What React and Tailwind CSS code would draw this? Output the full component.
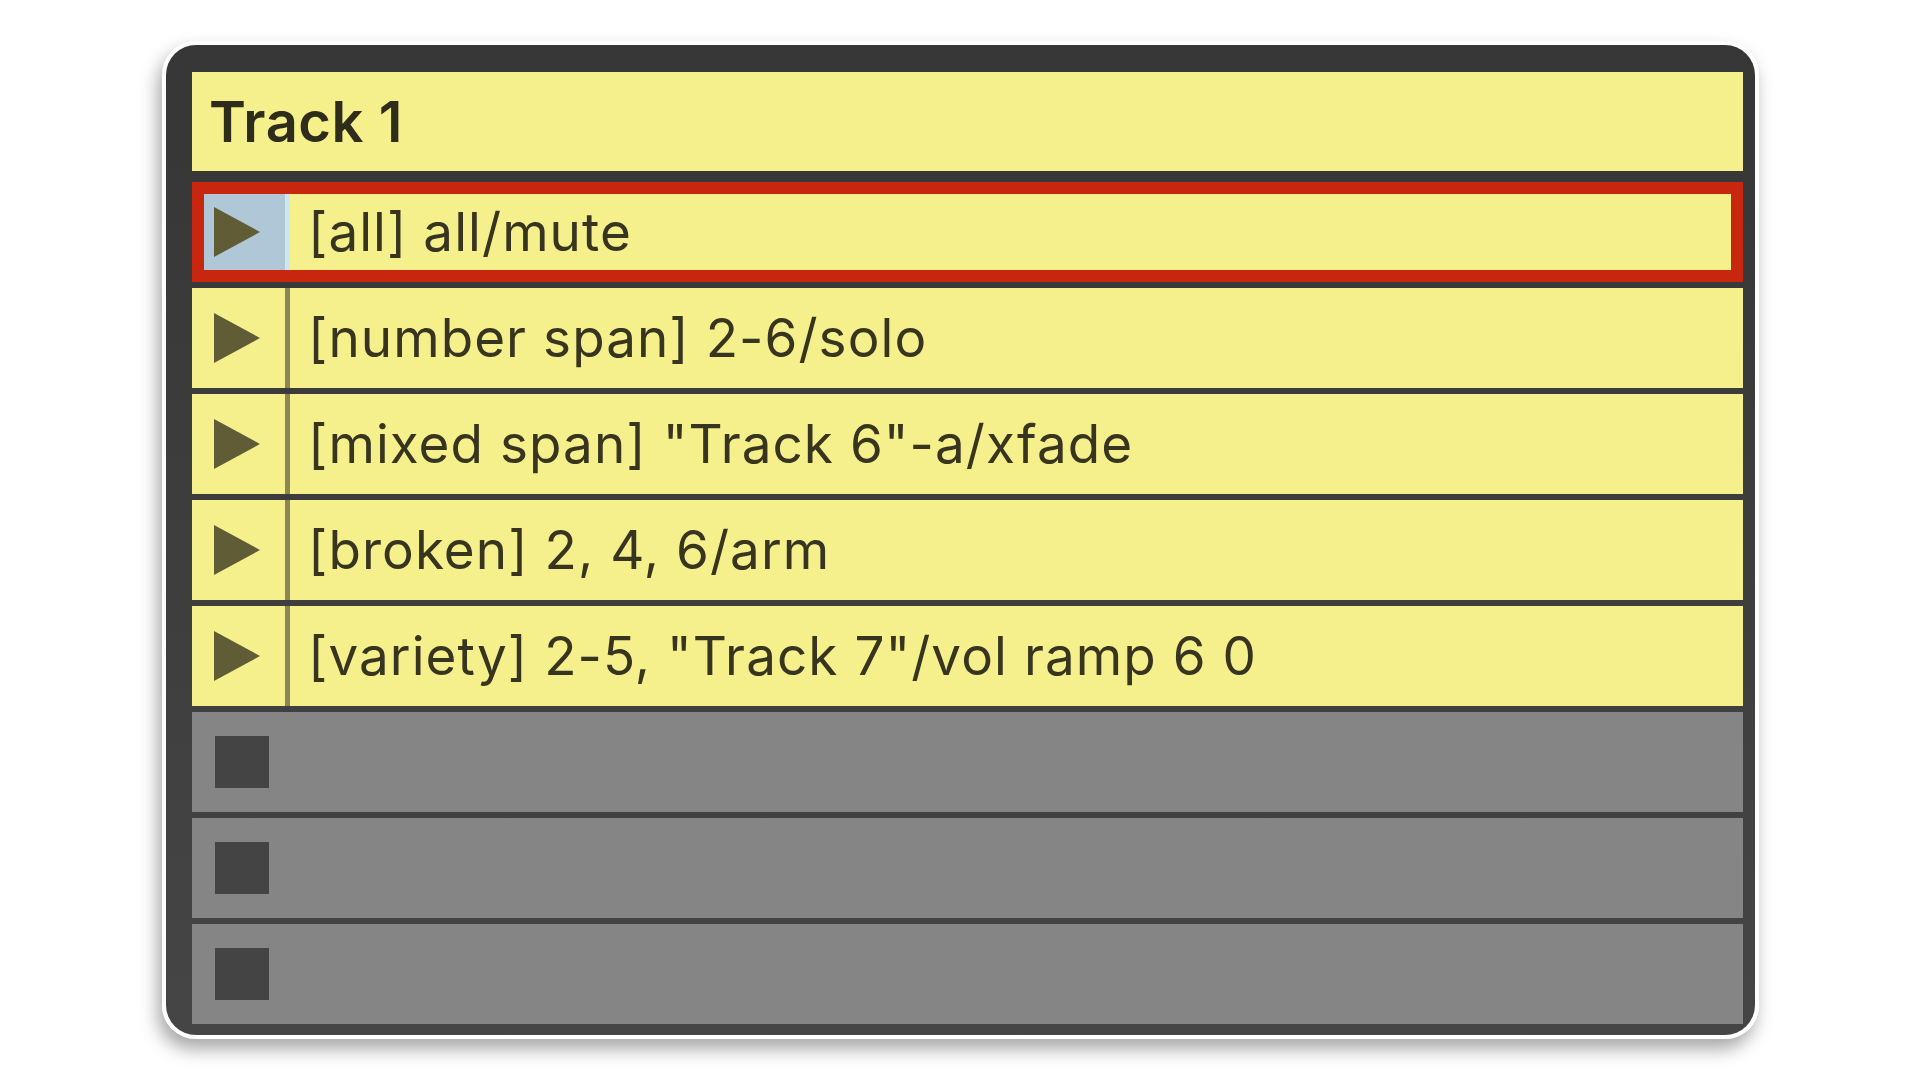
const clips = [
  { label: "[all] all/mute", selected: true },
  { label: "[number span] 2-6/solo" },
  { label: "[mixed span] \"Track 6\"-a/xfade" },
  { label: "[broken] 2, 4, 6/arm" },
  { label: "[variety] 2-5, \"Track 7\"/vol ramp 6 0" },
];

function PlayIcon() {
  return (
    <svg width="48" height="52" viewBox="0 0 48 52" className="shrink-0">
      <path d="M1 1 L47 26 L1 51 Z" fill="#5f5c36" />
    </svg>
  );
}

function ClipRow({ label, selected }) {
  return (
    <div className="relative h-[100px] flex bg-[#f5f08c]">
      <div className={`w-[93px] h-full flex items-center pl-[21px] ${selected ? "bg-[#afc7d6]" : ""}`}>
        <PlayIcon />
      </div>
      <div className={`w-[5px] h-full ${selected ? "bg-[#cde6ef]" : "bg-[#8a8656]"}`} />
      <div className="flex-1 flex items-center pl-[18px] text-[53px] tracking-[0.02em] text-[#37351f] leading-none whitespace-nowrap">
        {label}
      </div>
      {selected && (
        <div className="absolute inset-0 border-[12px] border-[#c8260f] pointer-events-none" />
      )}
    </div>
  );
}

function EmptySlot() {
  return (
    <div className="h-[100px] flex items-center pl-[23px] bg-[#858585]">
      <div className="w-[54px] h-[52px] bg-[#444444]" />
    </div>
  );
}

export default function App() {
  return (
    <div
      className="w-full h-screen bg-white pl-[162px] pt-[41px]"
      style={{ fontFamily: "Inter, 'Noto Sans', sans-serif" }}
    >
      <div className="w-[1597px] h-[998px] border-[4px] border-white rounded-[34px] shadow-[-4px_10px_18px_rgba(0,0,0,0.35)]">
        <div className="w-full h-full rounded-[30px] bg-gradient-to-b from-[#363636] to-[#454545] pt-[27px] pl-[26px] pr-[12px] pb-[11px] flex flex-col">
          <div className="h-[100px] bg-[#f5f08c] flex items-center pl-[17px] text-[56px] tracking-[0.01em] font-semibold text-[#2e2c1a] leading-none">
            Track 1
          </div>
          <div className="mt-[11px] flex flex-col gap-[6px]">
            {clips.map((c, i) => (
              <ClipRow key={i} label={c.label} selected={c.selected} />
            ))}
            <EmptySlot />
            <EmptySlot />
            <EmptySlot />
          </div>
        </div>
      </div>
    </div>
  );
}
